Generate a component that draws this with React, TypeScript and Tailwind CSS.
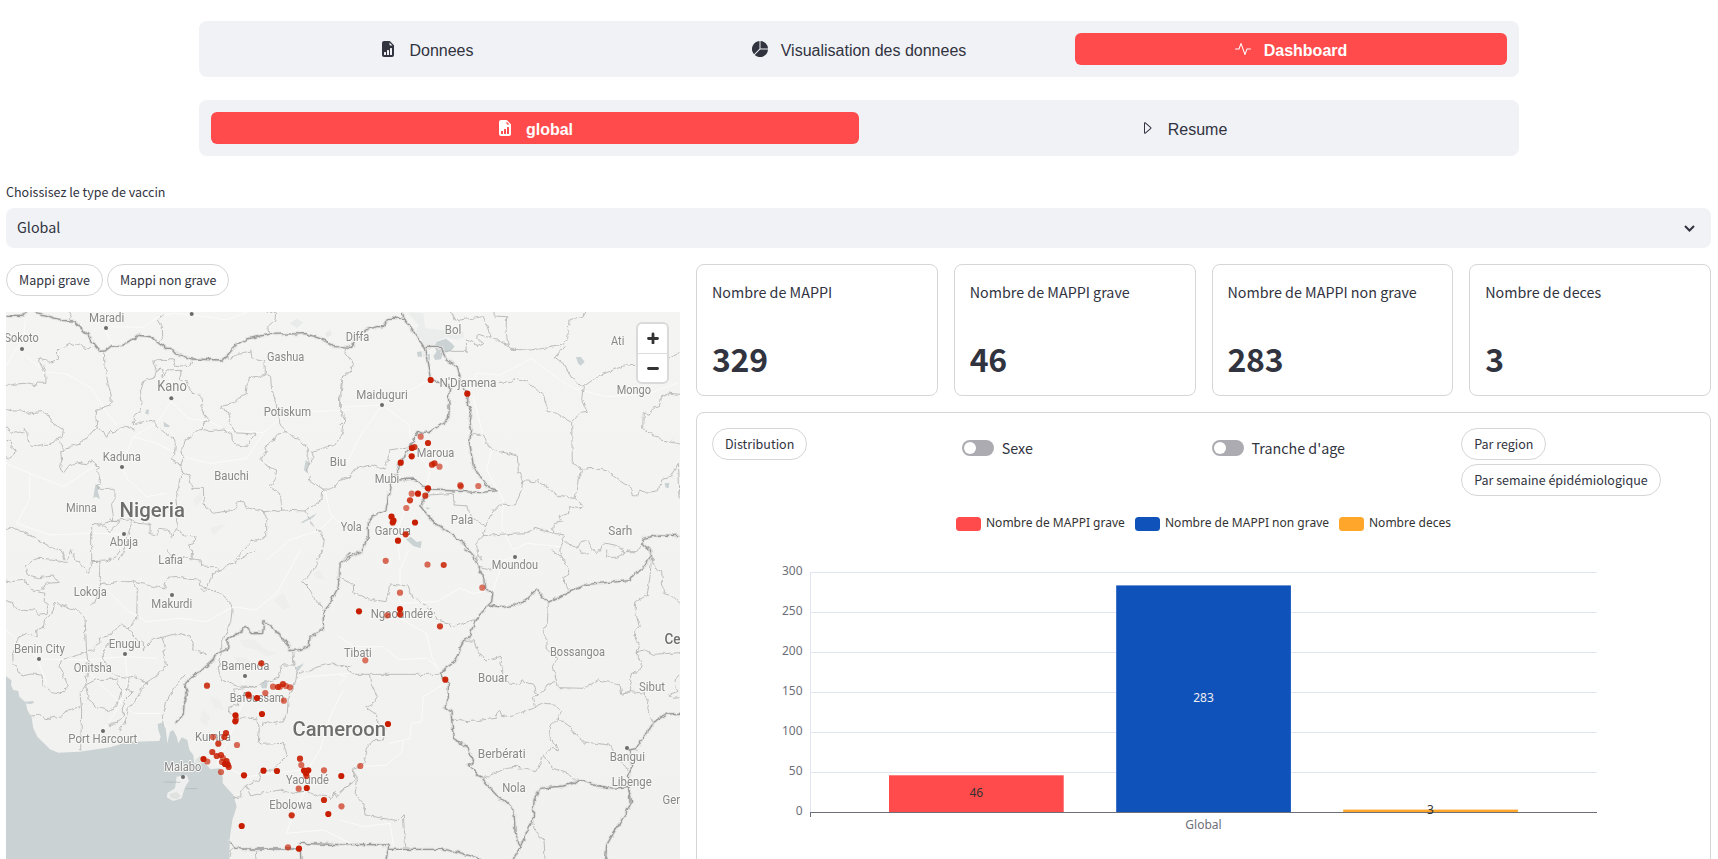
import { BsActivity, BsCaretRight, BsFileEarmarkBarGraphFill, BsPieChartFill } from "react-icons/bs";
import type { ReactNode } from "react";

const regionNorthWest = [
  "M18 410 L40 403 L72 400 L108 408 L112 396 L135 397 L134 365 L115 325 L145 335 L152 337 L172 328 L173 300 L208 280 L222 287 L240 282 L255 299 L275 287",
  "M208 187 L213 197 L208 208",
  "M313 305 L315 350 L325 405 L334 437 L330 445 L338 454 L330 465 L290 478 L288 505 L290 530",
  "M18 476 L34 480 L70 480 L78 490 L103 487 L128 485 L152 500 L150 515 L180 533 L190 540 L186 562 L170 566 L155 583 L130 583 L105 590 L90 588 L76 535 L66 552 L48 545 L32 550 L18 533",
  "M170 566 L182 577 L192 604 L215 585 L240 580 L254 572 L290 530 L305 540 L320 562 L330 540 L340 550 L360 533 L378 528 L402 543 L400 528 L415 520 L440 517 L462 512 L470 528 L490 545 L520 564 L526 578 L524 610 L512 628 L540 645 L552 670",
  "M192 604 L182 605 L185 630 L182 655 L192 667 L208 645 L235 637 L262 641 L278 633 L298 652 L290 665 L302 680 L300 700 L290 710 L310 718 L345 718 L345 752 L335 765 L340 800 L335 812 L300 825 L275 823 L275 930",
  "M462 383 L470 362 L482 357 L490 380 L500 363 L542 361 L543 372 L538 388 L550 395 L560 390 L568 415 L575 432 L585 429 L605 435 L608 460 L600 470 L612 480 L610 492 L626 512 L612 520 L606 535 L590 545 L552 572 L545 600 L549 620 L543 648 L552 670",
  "M462 383 L428 395 L418 425 L423 455 L420 485 L400 500 L400 528",
  "M670 330 L705 320 L715 310 L753 303 L755 320 L762 325 L795 332 L796 372 L815 380 L818 425 L828 460 L836 505 L843 530 L858 545",
  "M796 372 L770 382 L750 385 L742 400 L738 433 L712 447 L700 460 L668 468 L665 477 L690 488 L688 515 L696 533 L705 548 L765 553 L742 590 L710 585 L697 575 L695 550 L670 540 L630 545 L606 535",
  "M858 545 L830 550 L823 570 L794 590 L799 605 L783 626 L798 648 L830 660 L825 690 L808 710 L842 735 L845 780 L790 785 L740 773 L732 755 L712 755 L710 770 L690 782 L640 790 L612 765 L610 715 L575 715 L568 675 L552 670 L540 685 L530 738 L535 790 L530 835 L515 860 L503 838 L480 835 L470 855 L450 850 L450 823 L415 820 L390 807 L335 812",
  "M858 545 L875 560 L898 565 L925 600 L923 665 L932 680 L928 690 L968 717 L998 718 L1025 685 L1050 678",
  "M968 717 L966 750 L915 783 L845 780",
  "M915 783 L932 820 L955 840 L973 870 L968 895 L960 930",
  "M1048 362 L1028 380 L1018 435 L1020 485 L1035 510 L1028 545 L1005 585 L970 595 L935 605 L942 625 L923 650",
  "M530 838 L555 855 L585 858 L582 880 L562 885 L578 905 L575 930",
  "M790 785 L800 805 L800 855 L780 870 L755 875 L705 930",
  "M800 187 L828 187 L825 210 L803 230 L806 252",
  "M490 187 L475 210 L487 230 L488 260 L480 275",
  "M462 330 L490 328 L520 330 L525 345 L565 350 L578 330",
  "M462 330 L466 357 L490 360",
  "M18 835 L35 832 L70 845 L110 868 L160 895 L185 900 L195 930",
  "M330 808 L360 815 L330 845 L305 823",
  "M18 570 L35 575 L33 590 L45 600 L42 615 L28 625 L18 620",
  "M398 812 L385 850 L375 890 L358 930",
];

const regionNorthEast = [
  "M335 187 L348 212 L430 200 L455 265 L500 282 L505 292 L512 298 L570 300 L635 292 L668 285 L683 265 L687 212 L730 198 L735 187",
  "M462 187 L463 198 L500 200 L498 240 L505 292",
  "M378 304 L380 270 L400 276 L410 290 L432 282 L410 262 L412 252 L455 265",
  "M310 304 L378 304",
  "M672 290 L645 322 L675 345 L690 378 L730 410 L725 448 L742 487 L720 490 L695 518 L650 490 L625 485 L608 430 L583 415 L560 393 L526 385 L515 397 L472 397",
  "M730 410 L775 378 L850 348 L892 346",
  "M982 328 L1020 308",
  "M695 518 L697 640 L725 658 L705 745 L660 740 L645 730 L600 700 L592 687 L585 695 L548 692 L545 718 L525 765 L480 762 L455 790 L440 820 L430 857",
  "M725 658 L760 655 L800 662 L875 715 L880 737 L893 738 L898 724 L930 726 L958 722 L965 690 L990 682 L1015 640 L1020 742",
  "M390 558 L405 553 L432 553 L435 575 L460 600 L532 618 L535 665 L548 692",
  "M705 745 L730 768 L720 777 L690 770 L685 790 L660 800 L665 815 L640 822 L638 840 L645 850 L670 855 L670 875 L660 895 L660 910 L672 930",
  "M430 857 L520 850 L560 848 L585 835 L640 850",
  "M430 857 L410 880 L412 905 L425 930",
  "M672 870 L700 893 L715 890 L722 875 L742 872 L768 912 L795 880 L825 885 L855 905 L890 905 L908 878",
  "M988 430 L965 440 L958 470 L940 475 L930 497 L910 488 L908 535 L965 570 L1020 582",
  "M988 430 L1020 433",
  "M340 730 L342 765 L382 768 L392 800 L437 830",
  "M0 525 L15 510 L15 495 L0 478",
  "M20 295 L18 310 L38 340 L25 370 L8 382 L0 472",
  "M0 692 L30 680 L48 655 L95 645 L135 660 L150 600 L208 590",
  "M270 735 L340 730",
];

const regionSouthWest = [
  "M18 93 L35 97 L50 90 L70 88 L95 120 L135 130 L132 155 L145 163 L138 190 L115 193 L105 180 L70 178 L50 180 L35 160 L18 155",
  "M78 48 L100 30 L120 25 L162 28 L172 32 L200 38 L215 0",
  "M78 48 L85 75 L115 83 L160 78 L175 97 L145 100 L118 122",
  "M215 0 L225 30 L240 38 L265 70 L275 50 L273 35 L300 33 L298 85 L303 100 L285 160 L275 165",
  "M303 105 L345 95 L398 95 L440 105 L497 117 L492 100 L500 85 L535 82 L570 88 L600 90 L602 107 L622 115 L635 75 L660 60 L690 45 L765 0",
  "M273 35 L320 33 L345 20 L360 0",
  "M500 0 L520 20 L560 25 L600 30 L602 48 L640 50 L660 60",
  "M398 95 L412 120 L410 210 L385 233 L365 225 L345 237 L333 255 L297 265 L300 278 L282 290 L283 302 L260 305",
  "M163 158 L195 170 L235 182 L255 205 L260 305 L265 350 L257 405 L240 430 L245 480 L242 600",
  "M163 158 L160 185 L135 205 L130 232 L110 240 L112 260 L80 250 L50 265 L50 285 L38 310 L40 340 L65 378 L95 372 L125 375 L130 405 L158 428 L180 432 L205 408 L180 355 L183 330 L225 318 L260 305",
  "M385 233 L405 265 L430 275 L430 300 L460 268 L485 262 L498 295 L490 310 L500 345 L480 370 L438 398 L405 378 L380 382 L350 378 L320 350 L310 320 L310 300 L330 270",
  "M257 405 L290 388 L350 388 L365 420 L350 470 L325 482 L290 472 L265 450 L257 405",
  "M385 380 L380 420 L400 425 L370 455 L370 500 L345 522 L325 523",
  "M438 398 L430 410 L405 450 L385 475 L375 520 L360 540",
  "M95 498 L125 495 L135 507 L185 498 L205 480 L240 470",
  "M600 120 L650 122 L698 165 L692 215 L665 280 L665 305",
  "M485 262 L535 250 L565 258 L580 280 L578 300 L620 312",
  "M490 530 L487 500 L500 455 L535 395 L552 375",
  "M665 305 L655 355 L665 390 L710 408 L770 410 L790 398 L835 385 L845 345 L882 345 L878 302",
  "M770 410 L735 412 L705 418 L700 440 L715 445 L712 465 L690 470 L688 490 L715 510 L735 500 L765 510 L772 500 L778 535 L775 575 L785 583 L850 580 L862 617 L818 660 L785 658 L775 690 L738 708 L725 718 L722 740 L700 745",
  "M882 345 L892 365 L885 400 L865 440 L862 490 L850 515 L820 520 L800 515 L780 530",
  "M738 708 L752 738 L790 728 L840 720 L880 730 L920 722 L950 738 L985 740 L990 750 L1005 725 L1010 740 L1050 700",
  "M765 895 L768 927 M695 895 L690 920",
  "M965 0 L940 60 L905 95 L930 120 L945 150 L970 180",
  "M892 372 L930 360 L960 348 L1005 340 L1020 348 L1050 350",
];

const regionSouthEast = [
  "M0 80 L40 105 L42 130 L90 148 L138 155 L150 102 L205 108 L215 140 L255 165 L288 195 L290 210 L325 218 L335 233 L375 218 L408 207",
  "M0 348 L20 350 L35 373 L298 373",
  "M88 373 L92 397 L112 440 L95 465 L80 472 L110 492 L110 515 L135 535 L130 570 L105 568 L80 590 L72 640 L40 660 L45 690 L0 725",
  "M40 660 L52 690 L45 735 L72 765 L75 795 L130 805 L175 812 L190 797 L197 895",
  "M372 275 L402 272 L412 300 L430 325 L438 333 L485 318 L480 340 L488 360 L488 385 L510 403 L535 403 L545 387 L555 400 L580 405 L590 435",
  "M590 435 L580 440 L587 473 L520 495 L485 500 L480 480 L470 490 L468 505 L385 515 L340 510",
  "M625 165 L622 215 L607 237 L620 260 L622 300 L650 325 L640 350 L650 395 L655 413 L732 415 L775 390 L840 405 L845 433 L872 425 L872 375 L900 360 L905 335 L888 305 L898 285 L880 245 L898 230 L885 180 L888 155 L922 135 L930 80 L935 20",
  "M587 470 L610 460 L640 462 L665 485 L655 505 L628 530 L630 560 L655 600 L635 595 L612 615 L590 665 L530 652 L500 655 L427 685",
  "M655 505 L690 530 L725 575 L810 585 L830 620 L868 663",
  "M612 615 L640 655 L685 672 L705 692",
  "M590 435 L610 425 L620 405 L645 397",
  "M888 305 L915 300 L940 313 L1020 308",
  "M872 425 L915 430 L925 450 L920 475 L940 518",
  "M935 20 L945 55 L965 65 L970 130 L1000 140 L1020 160",
  "M415 0 L412 50 L450 60",
  "M635 0 L655 12 L690 60 L685 75 L668 82 L685 120",
  "M800 0 L800 22 L830 22 L870 0 M720 0 L725 14 L745 8",
  "M578 820 L590 850 L612 870 L615 927",
  "M1020 372 L1005 390 L1010 425 L985 435 L1000 445 L1020 443",
];

const nationalNorthWest = [
  "M18 199 L68 199 L78 187 M105 187 L150 200 L185 211 L220 213 L265 255 L283 285 L300 304 L315 303 L335 287 L362 290 L418 256 L455 261 L500 295 L515 295 L530 312 L575 327 L670 330 L710 283 L740 267 L805 253 L918 251 L958 265 L985 278 L1000 290 L1050 292",
];
const nationalNorthEast = [
  "M0 290 L35 292 L45 270 L80 240 L110 230 L130 230 L148 205 L192 205 L187 187",
  "M192 205 L253 292 L305 292 L318 330 L352 350 L360 378 L358 400 L385 430 L382 465 L393 480 L388 510 L395 540 L388 575 L400 645 L415 675 L432 690 L440 708 L470 722 L420 728 L330 722 L270 720 L240 768 L285 820 L370 880 L412 930",
  "M253 292 L272 388 L330 410 L325 440 L328 480 L325 510 L265 548 L235 545 L205 600 L180 640 L172 670 L145 690 L150 710 L138 780 L95 800 L85 815 L85 860 L65 905 L20 930",
  "M1020 857 L960 855 L910 865 L905 880 L935 905 L935 930",
  "M172 690 L220 687 L265 718",
];
const nationalSouthWest = [
  "M528 520 L550 492 L552 465 L562 435 L555 405 L572 380 L600 365 L640 330 L645 312 L665 305 L683 297 L685 265 L715 250 L738 232 L755 248 L788 248 L792 212 L825 240 L865 285 L870 302 L905 298 L928 290 L930 260 L970 240 L970 190 L1000 140 L1015 110 L1020 40 L1050 8",
  "M690 875 L700 890 L722 897 L900 897 L903 927 M900 880 L1050 885",
];
const nationalSouthEast = [
  "M375 0 L395 10 L435 90 L437 115 L458 130 L455 155 L408 207 L385 265 L370 272 L345 335 L302 365 L298 372 L325 400 L325 440 L315 472 L333 485 L340 565 L385 595 L400 640 L388 645 L478 745 L490 750 L522 780 L525 845 L540 892 L580 805 L582 750 L600 715 L670 708 L700 700 L715 688 L760 705 L820 715 L865 710 L875 755 L855 795 L820 850 L800 885 L797 927",
  "M0 40 L0 80 M0 40 L25 20 L65 5",
  "M450 165 L490 173 L545 160 L590 118 L625 160 L680 130 L740 103 L870 92 L880 75 L915 50 L935 15 L930 0",
  "M1020 490 L980 492 L940 518 L890 595 L868 600 L875 650 L865 680 L870 755",
  "M0 885 L60 883 L145 885 L145 898 L310 898 L345 905 L400 920 L420 927 M145 898 L138 927 M540 892 L520 927",
];

const roadsNorthWest = [
  "M75 215 L72 260 L20 345",
  "M66 310 L135 365 L200 372 L275 415 L315 480 L350 525",
  "M318 245 L340 290",
  "M335 230 L430 232 L475 200 L520 190 L620 200 L680 210 L740 187",
  "M514 445 L508 380 L490 350",
  "M514 455 L565 505 L630 515 L680 540 L790 548 L830 515 L860 490 L920 485 L1050 480",
  "M514 455 L470 520 L400 560 L375 620 L366 655 L385 690 L440 740 L500 730",
  "M400 560 L470 580 L550 620 L630 640 L740 625 L790 550",
  "M18 640 L90 670 L190 710 L280 650 M90 670 L88 750 L50 820 L150 855 L280 850 L372 852",
  "M1000 800 L960 840 L870 870 L800 930 M975 720 L990 790 L1050 850",
];
const roadsNorthEast = [
  "M0 472 L126 465 L210 420 L270 390 M126 465 L60 560 L20 640 M126 465 L208 525 L210 560 L240 620",
  "M382 430 L410 370 L480 375 L575 325 L640 375 L700 415 L800 440 L930 430 L1010 400",
  "M400 440 L425 540 L455 600 L440 660 L490 750 L485 830 L520 900 L560 880 L660 890",
  "M240 620 L270 660 L260 710 L200 760 L170 850 L180 930",
];
const roadsSouthWest = [
  "M303 100 L380 180 L440 215 L540 205 L620 215 L700 170 L765 180 L830 130 L880 40 L900 0",
  "M117 327 L250 330 L375 320 L470 325 M270 370 L330 430 L400 490 L480 490",
  "M18 240 L110 320 L140 400 M375 320 L385 400 L350 480 L309 543",
  "M735 378 L720 430 L790 450 L850 410 L920 380 L1050 370 M745 430 L710 500 L690 560 L650 640 L740 680 L900 660",
  "M920 665 L960 600 L990 500 L1030 420 M920 715 L880 790 L860 850 L970 840 L1050 880",
];
const roadsSouthEast = [
  "M205 0 L180 60 L180 160 L290 155 L360 115 L400 130 L460 120 L490 30 L525 20",
  "M180 205 L260 250 L275 320 L298 365 M0 260 L40 290 L130 290 L175 328 L260 325 L290 350",
  "M316 400 L250 440 L245 515 L215 520 L210 565 L150 580 M190 575 L185 605 L140 645 L70 650 M0 810 L70 830 L150 820 L160 885",
  "M0 375 L20 380 L0 400",
];

type Tile = { shift: string; roads: string[]; regions: string[]; nations: string[] };
const tiles: Tile[] = [
  { shift: "translate(0 250) scale(0.33333)", roads: roadsNorthWest, regions: regionNorthWest, nations: nationalNorthWest },
  { shift: "translate(340 250) scale(0.33333)", roads: roadsNorthEast, regions: regionNorthEast, nations: nationalNorthEast },
  { shift: "translate(0 550) scale(0.33333)", roads: roadsSouthWest, regions: regionSouthWest, nations: nationalSouthWest },
  { shift: "translate(340 550) scale(0.33333)", roads: roadsSouthEast, regions: regionSouthEast, nations: nationalSouthEast },
];

type Place = [name: string, left: number, right: number, baseline: number];
const towns: Place[] = [
  ["Maradi", 89, 124.3, 322], ["Sokoto", 4.5, 38.7, 342.3], ["Gashua", 267, 304.3, 361.3],
  ["Potiskum", 263.7, 311, 415.7], ["Kaduna", 102.7, 141, 460.7], ["Biu", 329.7, 346.3, 466.3],
  ["Bauchi", 214.3, 248.7, 480], ["Minna", 66, 96.7, 512.3], ["Abuja", 109.7, 138, 546],
  ["Diffa", 345.7, 369.3, 341], ["Bol", 444.7, 461.3, 333.7], ["Ati", 611, 624.3, 345.3],
  ["N'Djamena", 439.5, 496.5, 386.6], ["Maiduguri", 356.3, 407.7, 399.3], ["Mongo", 616.7, 651, 393.7],
  ["Maroua", 416.7, 454.3, 456.7], ["Mubi", 374.7, 399.3, 482.7], ["Pala", 450.7, 473.3, 523.7],
  ["Yola", 340.7, 361.7, 531.3], ["Garoua", 374.7, 411, 535], ["Sarh", 608.3, 632.3, 534.7],
  ["Lafia", 158.3, 183, 564], ["Lokoja", 73.7, 106.7, 596], ["Makurdi", 151.3, 192.3, 607.7],
  ["Benin City", 14, 65, 653], ["Enugu", 108.7, 140.7, 647.7], ["Onitsha", 73.7, 111.7, 671.7],
  ["Bamenda", 221.3, 269.3, 670.3], ["Bafoussam", 229.7, 284.3, 702.3], ["Kumba", 195, 231, 740.7],
  ["Port Harcourt", 68.3, 137.3, 743.3], ["Malabo", 164.3, 201.3, 771], ["Yaoundé", 286, 329, 784.3],
  ["Ebolowa", 269.3, 312, 809], ["Moundou", 491.7, 538, 569.3], ["Ngaoundéré", 370.7, 433, 618],
  ["Tibati", 344, 371.7, 657.3], ["Bouar", 478, 508.3, 681.7], ["Bossangoa", 550, 605, 656],
  ["Sibut", 639, 665, 690.7], ["Berbérati", 477.7, 525.7, 758], ["Bangui", 609.7, 645, 760.7],
  ["Nola", 502.3, 525.7, 791.7], ["Libenge", 611.7, 651.7, 785.7], ["Ger", 662.5, 680, 804],
];

const cityDots: [number, number][] = [
  [106, 328], [22, 349], [191.7, 314], [171.3, 398.3], [122, 467], [124, 534], [382, 405], [515, 557],
  [172, 595], [39, 659], [125, 654], [103, 731], [245, 676], [183, 777], [627, 748],
];

type Mark = [x: number, y: number, strength: number];
const marks: Mark[] = [
  [430.7, 380, 1], [467.3, 393.7, 1], [420.7, 436.7, 0.6], [428, 443, 0.95], [412, 448, 1], [414.5, 447, 0.85],
  [411.7, 456.3, 1], [400.7, 462.7, 1], [432, 464.7, 0.85], [434.5, 463.3, 0.85], [439.5, 466.7, 0.6],
  [460.3, 485, 0.6], [460.7, 486.3, 0.75], [478.3, 486, 0.6], [428, 488.3, 1], [411.7, 493.7, 0.6],
  [418, 493.7, 1], [425.3, 495.7, 0.85], [410, 500.3, 0.85], [406.3, 508, 0.6], [391.5, 516.7, 1],
  [393.5, 520.7, 1], [392.7, 522.5, 1], [415, 522.5, 1], [405.7, 534.3, 0.9], [398, 540.7, 1],
  [385.7, 560.8, 0.65], [427.5, 564.7, 0.65], [443.7, 565, 0.85], [482.3, 587.7, 0.6], [400, 592.7, 0.65],
  [359, 611.3, 1], [400, 609, 1], [400, 614.3, 0.9], [387.3, 615.3, 0.65], [440, 626.3, 0.85],
  [365.3, 660.3, 0.6], [445.3, 679.7, 0.95], [388, 724, 1], [360.3, 766, 0.65], [341.3, 776, 1], [341.5, 806.3, 0.65],
  [261.3, 663.3, 0.85], [207, 685.7, 0.85], [273, 686.7, 0.65], [278, 687, 0.85], [280, 686.7, 0.65],
  [283, 684, 0.85], [286, 686, 0.6], [290, 687.3, 0.65], [265.3, 693, 0.65], [248.3, 694.5, 0.95],
  [249, 696, 0.65], [257, 698, 1], [283.8, 700.7, 0.65], [262, 714, 1], [235.5, 715.3, 1],
  [235.3, 721.3, 1], [236, 719, 0.6], [226, 733, 0.9], [224.3, 737, 0.85], [213, 737, 0.65], [218.3, 743.7, 0.85],
  [237, 745, 0.65], [212.3, 752, 0.85], [216.7, 756, 0.85], [221, 755, 0.85], [223, 758, 0.65],
  [203.5, 759, 1], [207.3, 761.5, 0.65], [222, 762, 0.7], [226.5, 761, 0.9], [225, 764, 1], [227.7, 764.7, 1],
  [228.7, 767, 0.85], [221, 772, 0.65], [244, 775.3, 1], [263.5, 770.7, 1], [277, 771, 1],
  [300, 758.7, 0.9], [301.3, 765, 0.65], [304, 770.5, 1], [308.3, 770.3, 1], [306, 773.3, 1], [306.5, 776, 0.8],
  [324, 770.3, 0.65], [298.7, 788.7, 0.65], [306.8, 788, 1], [324, 800, 0.95], [328.3, 814, 1],
  [291.7, 815.3, 0.9], [241.7, 826, 1], [288, 847.3, 0.65], [299, 848.7, 1],
];

function MapView() {
  return (
    <div className="relative h-[547px] w-[674px] overflow-hidden">
      <svg viewBox="6 312 674 547" className="block h-[547px] w-[674px] bg-[#f3f3f1]" fill="none" strokeLinejoin="round" strokeLinecap="round">
        <defs>
          <linearGradient id="land" x1="0" y1="0" x2="0" y2="1">
            <stop offset="0" stopColor="#f4f4f3" />
            <stop offset="1" stopColor="#f1f1ef" />
          </linearGradient>
          <filter id="meander" filterUnits="userSpaceOnUse" x="0" y="300" width="690" height="570" colorInterpolationFilters="sRGB">
            <feTurbulence type="fractalNoise" baseFrequency="0.16" numOctaves="2" seed="4" result="noise" />
            <feDisplacementMap in="SourceGraphic" in2="noise" scale="5" xChannelSelector="R" yChannelSelector="G" />
          </filter>
        </defs>
        <rect x="6" y="312" width="674" height="547" fill="url(#land)" />
        <g transform="translate(0 550) scale(0.33333)">
          <path
            fill="#cad2d3"
            d="M18 378 L30 388 L35 392 L33 405 L40 420 L55 423 L58 440 L75 455 L98 453 L103 458 L90 463 L78 460 L82 480 L95 503 L100 535 L112 560 L132 580 L150 598 L175 608 L240 605 L330 592 L372 580 L400 575 L478 573 L482 560 L475 540 L473 522 L485 518 L497 535 L502 580 L510 545 L520 540 L530 560 L535 580 L545 562 L562 570 L568 600 L580 615 L583 640 L612 636 L632 658 L660 655 L668 680 L668 700 L700 735 L710 770 L697 810 L690 860 L688 927 L18 927 Z"
          />
          <path fill="#eeefee" d="M530 680 L560 675 L567 692 L555 712 L545 745 L520 753 L500 742 L503 728 L525 715 Z" />
          <path fill="#e0e2e0" d="M508 732 L530 725 L542 738 L530 748 L512 744 Z M585 630 L600 618 L610 638 L590 642 Z" />
          <path stroke="#adb5b6" strokeWidth="2" d="M492 696 L540 697 M558 716 L590 716" />
          <path fill="#cad2d3" d="M783 405 L795 390 L803 398 L800 415 L785 415 Z M888 352 L912 340 L900 356 L892 366 Z" />
          <path fill="#eeeeec" d="M720 270 L760 268 L800 300 L830 310 L800 320 L770 300 L730 290 Z M700 320 L740 325 L765 350 L720 345 Z M820 150 L850 130 L870 170 L850 180 Z M940 70 L960 60 L975 90 L950 85 Z M630 440 L660 450 L670 480 L640 470 Z M610 480 L630 500 L620 530 L600 510 Z" />
        </g>
        <g transform="translate(0 250) scale(0.33333)">
          <path fill="#cad2d3" d="M435 490 L440 478 L447 480 L445 494 Z M491 515 L510 528 L505 532 L492 530 Z M287 702 L300 712 L293 722 L300 748 L288 740 L280 745 L283 722 Z M917 630 L928 640 L920 668 L912 660 Z M903 817 L950 790 L940 802 L907 820 Z" />
          <path fill="#e9ebea" d="M870 220 L890 206 L910 218 L890 234 Z M975 250 L990 240 L996 255 L980 262 Z" />
          <path fill="#eeeeec" d="M580 750 L600 730 L610 745 L590 768 Z M630 835 L680 820 L640 855 Z" />
        </g>
        <g transform="translate(340 250) scale(0.33333)" filter="none">
          <path fill="#eaedec" d="M204 190 L215 187 L250 190 L255 235 L310 240 L370 245 L372 262 L350 270 L320 262 L290 272 L280 290 L253 292 L245 268 L225 250 L236 225 Z" />
          <path fill="#cad2d3" d="M283 290 L290 275 L318 266 L335 280 L344 290 L330 305 L310 308 L303 328 L285 330 L280 318 L290 305 Z M231 306 L245 304 L246 320 L233 320 Z M258 312 L270 312 L270 332 L262 330 Z M708 322 L722 320 L734 335 L722 347 L714 340 Z M974 700 L988 698 L986 715 L976 712 Z M198 868 L212 860 L230 876 L245 873 L242 895 L220 888 Z M258 772 L272 774 L260 779 Z" />
        </g>
        {tiles.map((tile) => (
          <g key={tile.shift} transform={tile.shift}>
            {tile.roads.map((d) => (
              <path key={d} d={d} stroke="#fdfdfd" strokeWidth="2.4" />
            ))}
          </g>
        ))}
        <g filter="url(#meander)">
          {tiles.map((tile) => (
            <g key={tile.shift} transform={tile.shift}>
              {tile.regions.map((d) => (
                <path key={d} d={d} stroke="#b8b8b7" strokeWidth="2.8" />
              ))}
              {tile.nations.map((d) => (
                <path key={d} d={d} stroke="#e3e3e2" strokeWidth="10" />
              ))}
              {tile.nations.map((d) => (
                <path key={d} d={d} stroke="#9b9b9b" strokeWidth="3.9" />
              ))}
            </g>
          ))}
        </g>
        {cityDots.map(([x, y]) => (
          <circle key={`${x}-${y}`} cx={x} cy={y} r="2" fill="#6b6b6b" />
        ))}
        <g fontFamily="Roboto, sans-serif" stroke="#f8f8f7" strokeWidth="2" paintOrder="stroke">
          {towns.map(([name, left, right, baseline]) => (
            <text key={name} x={left} y={baseline} textLength={right - left} lengthAdjust="spacingAndGlyphs" fontSize="13" fill="#888888">
              {name}
            </text>
          ))}
          <text x="157.3" y="391" textLength="29.5" lengthAdjust="spacingAndGlyphs" fontSize="14" fill="#888888">Kano</text>
          <text x="119.5" y="516.7" textLength="65.5" lengthAdjust="spacingAndGlyphs" fontSize="20.5" fontWeight="500" fill="#6e6e6e">Nigeria</text>
          <text x="292.5" y="736" textLength="93.5" lengthAdjust="spacingAndGlyphs" fontSize="20.5" fontWeight="500" fill="#6e6e6e">Cameroon</text>
          <text x="664.5" y="643.7" textLength="16" lengthAdjust="spacingAndGlyphs" fontSize="15" fontWeight="500" fill="#6e6e6e">Ce</text>
        </g>
        {marks.map(([x, y, strength]) => (
          <circle key={`${x}-${y}`} cx={x} cy={y} r="3.1" fill="#c81e00" fillOpacity={strength} />
        ))}
      </svg>
      <div className="absolute top-[10px] right-[11px] flex h-[62px] w-[33px] flex-col rounded-md border-2 border-[#dadada] bg-white text-[#333333]">
        <button className="flex flex-1 items-center justify-center border-b border-[#dddddd]" aria-label="+">
          <svg className="size-3" viewBox="0 0 12 12" stroke="currentColor" strokeWidth="2.8" strokeLinecap="round">
            <path d="M1.5 6.5h9M6 2v9" />
          </svg>
        </button>
        <button className="flex flex-1 items-center justify-center" aria-label="-">
          <svg className="size-3" viewBox="0 0 12 12" stroke="currentColor" strokeWidth="2.8" strokeLinecap="round">
            <path d="M1.5 6.5h9" />
          </svg>
        </button>
      </div>
    </div>
  );
}

function Pill({ children }: { children: ReactNode }) {
  return (
    <button className="flex h-8 items-center rounded-full border border-[#d6d6d9] bg-white px-3 text-[12.5px] leading-none whitespace-nowrap">
      {children}
    </button>
  );
}

function NavTab({ icon, label, active = false }: { icon: ReactNode; label: string; active?: boolean }) {
  return (
    <a
      className={
        active
          ? "flex h-8 flex-1 items-center justify-center rounded-md bg-[#ff4b4b] font-bold text-white"
          : "flex h-8 flex-1 items-center justify-center rounded-md"
      }
    >
      <span className="mr-[13px] flex">{icon}</span>
      <span className="pt-[3px]">{label}</span>
    </a>
  );
}

function Toggle({ label }: { label: string }) {
  return (
    <label className="flex h-4 items-center gap-2 text-[14.3px]">
      <span className="flex h-4 w-8 items-center rounded-full bg-[#acabb1] pl-0.5">
        <span className="size-3 rounded-full bg-white" />
      </span>
      <span className="leading-none">{label}</span>
    </label>
  );
}

const metrics = [
  { label: "Nombre de MAPPI", value: 329 },
  { label: "Nombre de MAPPI grave", value: 46 },
  { label: "Nombre de MAPPI non grave", value: 283 },
  { label: "Nombre de deces", value: 3 },
];

function BarChart() {
  const ticks = [300, 250, 200, 150, 100, 50];
  return (
    <svg viewBox="712 500 983 359" className="block h-[359px] w-[983px]" fontFamily="'Noto Sans', sans-serif" fontSize="12">
      <rect x="956" y="517" width="25" height="14" rx="3.5" fill="#ff4b4b" />
      <text x="986" y="527" fill="#333333">Nombre de MAPPI grave</text>
      <rect x="1135" y="517" width="25" height="14" rx="3.5" fill="#0f52ba" />
      <text x="1165" y="527" fill="#333333">Nombre de MAPPI non grave</text>
      <rect x="1339" y="517" width="25" height="14" rx="3.5" fill="#ffa62b" />
      <text x="1369" y="527" fill="#333333">Nombre deces</text>
      {ticks.map((tick) => (
        <g key={tick}>
          <path d={`M810 ${812.5 - tick * 0.8}H1597`} stroke="#e0e6f1" />
          <text x="802.5" y={815 - tick * 0.8} textAnchor="end" fill="#6e7079">{tick}</text>
        </g>
      ))}
      <text x="802.5" y="815" textAnchor="end" fill="#6e7079">0</text>
      <path d="M810.5 572V812" stroke="#e0e6f1" />
      <rect x="889" y="775.3" width="174.7" height="37" fill="#ff4b4b" />
      <rect x="1116.2" y="585.4" width="174.7" height="227" fill="#0f52ba" />
      <rect x="1343.2" y="809.6" width="174.7" height="2.8" fill="#ffa62b" />
      <path d="M810 812.5H1597M810.5 812V817" stroke="#6e7079" />
      <text x="976.3" y="797" textAnchor="middle" fill="#333333">46</text>
      <text x="1203.5" y="702" textAnchor="middle" fill="#eeeeee">283</text>
      <text x="1430.5" y="814" textAnchor="middle" fill="#333333">3</text>
      <text x="1203.5" y="829" textAnchor="middle" fill="#6e7079">Global</text>
    </svg>
  );
}

export default function App() {
  return (
    <main className="h-[859px] w-[1718px] overflow-hidden bg-white px-1.5 pt-[21px] font-['Noto_Sans_CJK_JP','Noto_Sans',sans-serif] text-[#31333f]">
      <div className="mx-auto flex w-[1320px] flex-col gap-[23px] font-['Liberation_Sans',Arial,sans-serif] text-base">
        <nav className="flex h-14 items-center rounded-lg bg-[#f0f2f6] px-3">
          <NavTab icon={<BsFileEarmarkBarGraphFill />} label="Donnees" />
          <NavTab icon={<BsPieChartFill />} label="Visualisation des donnees" />
          <NavTab icon={<BsActivity />} label="Dashboard" active />
        </nav>
        <nav className="flex h-14 items-center rounded-lg bg-[#f0f2f6] px-3">
          <NavTab icon={<BsFileEarmarkBarGraphFill />} label="global" active />
          <NavTab icon={<BsCaretRight />} label="Resume" />
        </nav>
      </div>

      <div className="mt-[25px] flex h-[23px] items-center text-[12.5px] leading-none">Choissisez le type de vaccin</div>
      <div className="mt-1 flex h-10 w-[1705px] items-center justify-between rounded-lg bg-[#f0f2f6] pr-[16px] pl-[11px] text-[14.3px]">
        <span className="pb-0.5 leading-none">Global</span>
        <svg className="h-[7px] w-[11px]" viewBox="0 0 11 7" fill="none" stroke="currentColor" strokeWidth="2">
          <path d="M1 1l4.5 4.5L10 1" />
        </svg>
      </div>

      <div className="mt-4 flex w-[1705px] gap-4">
        <section className="w-[674px] shrink-0">
          <div className="mb-4 flex gap-1">
            <Pill>Mappi grave</Pill>
            <Pill>Mappi non grave</Pill>
          </div>
          <MapView />
        </section>

        <section className="flex min-w-0 flex-1 flex-col gap-4">
          <div className="grid grid-cols-4 gap-4">
            {metrics.map((metric) => (
              <article key={metric.label} className="h-[132px] rounded-lg border border-[#d6d6d9] px-[15px] pt-[15px]">
                <h3 className="h-6 text-[14.3px] leading-6 whitespace-nowrap">{metric.label}</h3>
                <p className="mt-8 text-[32px] leading-[44px] font-semibold tracking-[-0.3px]">{metric.value}</p>
              </article>
            ))}
          </div>
          <article className="h-[460px] rounded-lg border border-[#d6d6d9] px-[15px] pt-[15px]">
            <div className="grid h-[72px] grid-cols-4 gap-4">
              <div className="flex items-start">
                <Pill>Distribution</Pill>
              </div>
              <div className="pt-3">
                <Toggle label="Sexe" />
              </div>
              <div className="pt-3">
                <Toggle label="Tranche d'age" />
              </div>
              <div className="flex flex-col items-start gap-1">
                <Pill>Par region</Pill>
                <Pill>Par semaine épidémiologique</Pill>
              </div>
            </div>
            <BarChart />
          </article>
        </section>
      </div>
    </main>
  );
}
